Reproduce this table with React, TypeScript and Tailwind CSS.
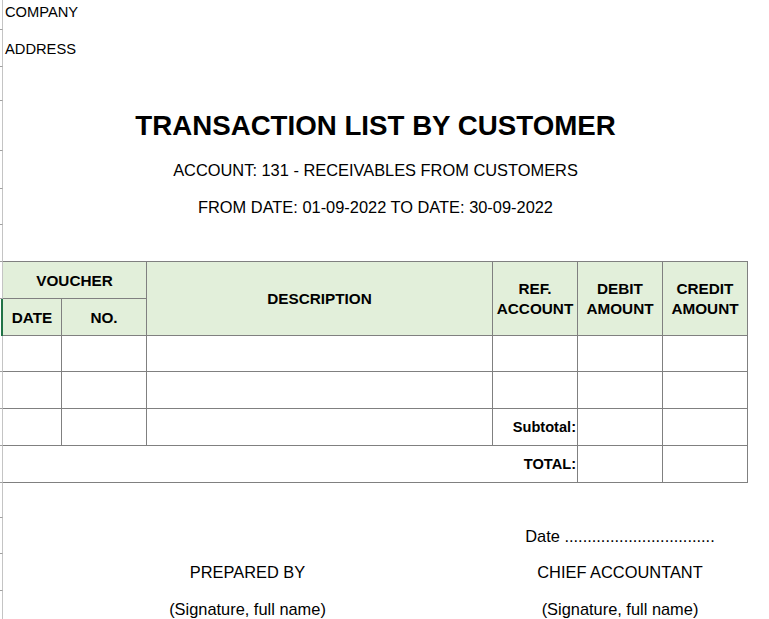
const gutterRows = [30, 37, 34, 50, 38, 36, 37, 37, 37, 36, 37, 37, 37, 35, 36, 37, 37];

function Gutter() {
  return (
    <div className="flex w-[3px] shrink-0 flex-col">
      {gutterRows.map((h, i) =>
        i === 8 ? (
          <div key={i} className="ml-[1px] w-[2px] shrink-0 bg-[#217346]" style={{ height: h }} />
        ) : (
          <div
            key={i}
            className="w-[3px] shrink-0 border-b border-r border-b-[#a0a0a0] border-r-[#c4c4c4]"
            style={{ height: h }}
          />
        )
      )}
    </div>
  );
}

const head = 'flex items-center justify-center bg-[#e2efda] pt-[1px] text-center text-[15.3px] font-bold leading-[20px]';
const cell = 'bg-white';
const label = 'flex items-center justify-end bg-white pr-[1px] pt-[2px] text-[14.6px] font-bold';

function TransactionTable() {
  return (
    <div className="grid w-[745px] grid-cols-[58px_84px_345px_84px_84px_84px] grid-rows-[36px_36px_35px_36px_36px_36px] gap-px bg-[#808080] pb-px pr-px pt-px">
      <div className={`${head} col-span-2`}>VOUCHER</div>
      <div className={`${head} row-span-2`}>DESCRIPTION</div>
      <div className={`${head} row-span-2`}>
        REF.
        <br />
        ACCOUNT
      </div>
      <div className={`${head} row-span-2`}>
        DEBIT
        <br />
        AMOUNT
      </div>
      <div className={`${head} row-span-2`}>
        CREDIT
        <br />
        AMOUNT
      </div>
      <div className={head}>DATE</div>
      <div className={head}>NO.</div>

      {/* empty rows */}
      {Array.from({ length: 12 }).map((_, i) => (
        <div key={i} className={cell} />
      ))}

      {/* subtotal */}
      <div className={cell} />
      <div className={cell} />
      <div className={cell} />
      <div className={label}>Subtotal:</div>
      <div className={cell} />
      <div className={cell} />

      {/* total */}
      <div className={`${label} col-span-4`}>TOTAL:</div>
      <div className={cell} />
      <div className={cell} />
    </div>
  );
}

export default function App() {
  return (
    <div className="flex h-[619px] w-[769px] overflow-hidden bg-white font-['Liberation_Sans',Arial,sans-serif] text-black">
      <Gutter />
      <div className="flex w-[766px] flex-col">
        <div className="h-[29px] shrink-0 pl-[2px] pt-[4px] text-[14.7px] leading-[16px]">COMPANY</div>
        <div className="h-[37px] shrink-0 pl-[2px] pt-[12px] text-[14.7px] leading-[16px]">ADDRESS</div>
        <div className="h-[34px] shrink-0" />

        <div className="flex h-[50px] w-[745px] shrink-0 items-center justify-center pt-[1px] text-[27.7px] font-bold">
          TRANSACTION LIST BY CUSTOMER
        </div>
        <div className="flex h-[38px] w-[745px] shrink-0 items-center justify-center pt-[2px] text-[16.4px]">
          ACCOUNT: 131 - RECEIVABLES FROM CUSTOMERS
        </div>
        <div className="flex h-[36px] w-[745px] shrink-0 items-center justify-center pt-[2px] text-[16.4px]">
          FROM DATE: 01-09-2022 TO DATE: 30-09-2022
        </div>
        <div className="h-[37px] shrink-0" />

        <TransactionTable />

        <div className="h-[34px] shrink-0" />

        {/* signatures */}
        <div className="flex h-[36px] shrink-0 text-[16.4px]">
          <div className="w-[489px]" />
          <div className="flex w-[256px] items-center justify-center pt-[2px]">Date .................................</div>
        </div>
        <div className="flex h-[37px] shrink-0 text-[16.4px]">
          <div className="flex w-[489px] items-center justify-center pt-[2px]">PREPARED BY</div>
          <div className="flex w-[256px] items-center justify-center pt-[2px]">CHIEF ACCOUNTANT</div>
        </div>
        <div className="flex h-[37px] shrink-0 text-[16.4px]">
          <div className="flex w-[489px] items-center justify-center pt-[2px]">(Signature, full name)</div>
          <div className="flex w-[256px] items-center justify-center pt-[2px]">(Signature, full name)</div>
        </div>
      </div>
    </div>
  );
}
